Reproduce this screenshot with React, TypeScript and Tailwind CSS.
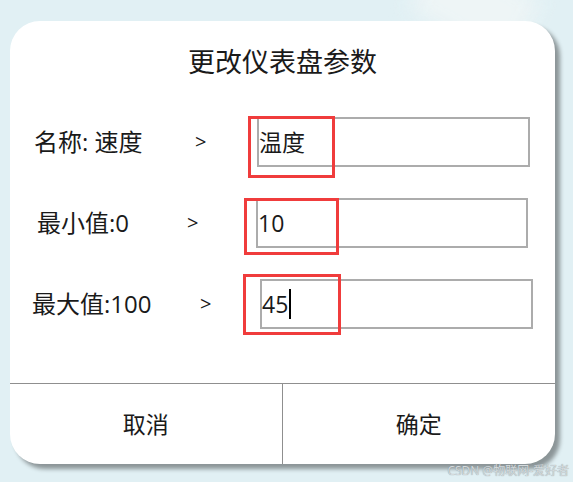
import React from "react"

const font = { fontFamily: '"Open Sans", "Noto Sans CJK SC", sans-serif' }

type Row = {
    label: string
    value: string
    caret?: boolean
    pad: string
    labelW: string
    arrowW: string
    inputW: string
    mark: string
}

const rows: Row[] = [
    { label: "名称: 速度", value: "温度", pad: "pl-[24px]", labelW: "w-[161px]", arrowW: "w-[62px]", inputW: "w-[273px]", mark: "-left-[11px] -top-[3px] w-[87px] h-[62px]" },
    { label: "最小值:0", value: "10", pad: "pl-[27px]", labelW: "w-[150px]", arrowW: "w-[69px]", inputW: "w-[272px]", mark: "-left-[14px] -top-[2px] w-[95px] h-[57px]" },
    { label: "最大值:100", value: "45", caret: true, pad: "pl-[22px]", labelW: "w-[168px]", arrowW: "w-[60px]", inputW: "w-[273px]", mark: "-left-[19px] -top-[7px] w-[98px] h-[61px]" },
]

function ParamRow({ row }: { row: Row }) {
    return (
        <div className={`flex items-center ${row.pad}`}>
            <span className={`${row.labelW} text-[24px] leading-[30px] text-[#1a1a1a] whitespace-nowrap`}>{row.label}</span>
            <span className={`${row.arrowW} text-[20px] leading-[30px] text-[#1a1a1a]`}>&gt;</span>
            <div className={`relative ${row.inputW} h-[50px] border-2 border-[#acacac] flex items-center`}>
                <span className="text-[23px] leading-[30px] text-[#1a1a1a]">{row.value}</span>
                {row.caret && <span className="ml-[1px] w-[1.5px] h-[30px] bg-black" />}
                {/* annotation box */}
                <div className={`absolute ${row.mark} border-[3px] border-[#f03c3c]`} />
            </div>
        </div>
    )
}

export default function App() {
    return (
        <div className="relative w-[573px] h-[482px] overflow-hidden bg-[#e1f0f4] pt-[21px] pl-[10px]" style={font}>
            <div className="absolute -top-[30px] left-[420px] w-[110px] h-[70px] rotate-[30deg] bg-[#eef5f6] blur-[10px]" />
            <div className="relative w-[545px] h-[443px] rounded-[30px] bg-white shadow-[5px_5px_4px_rgba(0,0,0,0.38)] flex flex-col overflow-hidden">
                <div className="pt-[22px] text-center text-[27px] leading-[38px] text-[#1a1a1a]">更改仪表盘参数</div>
                <div className="mt-[36px] flex flex-col gap-[31px]">
                    {rows.map((row, i) => (
                        <ParamRow key={i} row={row} />
                    ))}
                </div>
                <div className="flex-1" />
                <div className="h-[81px] border-t border-[#8f8f8f] grid grid-cols-2">
                    <div className="border-r border-[#8f8f8f] flex items-center justify-center text-[23px] text-[#1a1a1a]">取消</div>
                    <div className="flex items-center justify-center text-[23px] text-[#1a1a1a]">确定</div>
                </div>
            </div>
            <div className="absolute right-[4px] bottom-[4px] text-[12px] leading-[14px] text-[#d4dadd] [text-shadow:0_0_1px_#7d878c]">CSDN @物联网-爱好者</div>
        </div>
    )
}
